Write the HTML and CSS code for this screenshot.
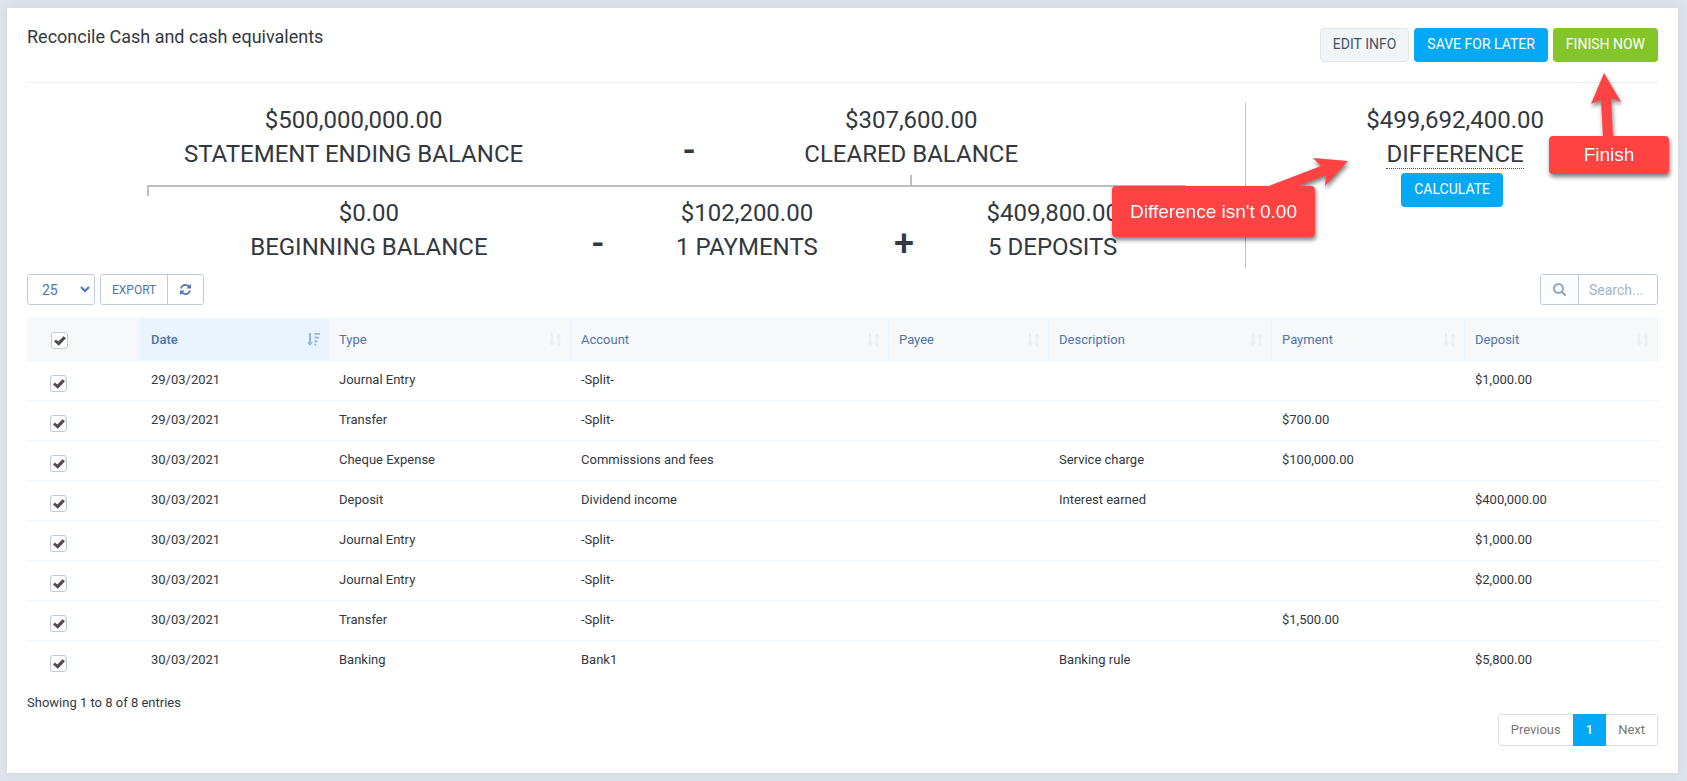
FILE: index.html
```html
<!DOCTYPE html>
<html lang="en">
<head>
<meta charset="utf-8">
<title>Reconcile Cash and cash equivalents</title>
<link rel="stylesheet" href="styles.css">
</head>
<body>
<svg class="sprite" aria-hidden="true">
  <symbol id="sort" viewBox="0 0 14 14"><path d="M2 0h2.500v10H6.500L3.250 14 0 10h2zM9.500 14h2.500V4h2L10.750 0 7.500 4h2z"/></symbol>
</svg>
<main class="panel">
  <header class="panel-head">
    <h1 class="title">Reconcile Cash and cash equivalents</h1>
    <div class="actions">
      <button class="btn btn-default" type="button">Edit info</button>
      <button class="btn btn-info" type="button">Save for later</button>
      <button class="btn btn-success" type="button">Finish now</button>
    </div>
  </header>

  <section class="summary">
    <div class="equation">
      <div class="row row-top">
        <div class="figure">$500,000,000.00<br>STATEMENT ENDING BALANCE</div>
        <div class="operator">-</div>
        <div class="figure figure-stub">$307,600.00<br>CLEARED BALANCE</div>
      </div>
      <div class="row row-bottom">
        <div class="figure">$0.00<br>BEGINNING BALANCE</div>
        <div class="operator">-</div>
        <div class="figure">$102,200.00<br>1 PAYMENTS</div>
        <div class="operator">+</div>
        <div class="figure">$409,800.00<br>5 DEPOSITS</div>
      </div>
    </div>
    <div class="difference">
      <div class="figure">$499,692,400.00<br><span class="hint">DIFFERENCE</span></div>
      <button class="btn btn-info" type="button">Calculate</button>
    </div>
  </section>

  <div class="toolbar">
    <div class="tools">
      <div class="length">
        <select class="length-select" aria-label="Rows per page"><option>25</option></select>
        <svg class="chevron" viewBox="0 0 10 7" aria-hidden="true"><path d="M1 1l4 4 4-4"/></svg>
      </div>
      <div class="group">
        <button class="tool" type="button">Export</button>
        <button class="tool tool-icon" type="button" aria-label="Refresh"><svg class="refresh" viewBox="0 0 1536 1536" aria-hidden="true"><path d="M1511 928q0 5-1 7-64 268-268 434.500T764 1536q-146 0-282.500-55T238 1324l-129 129q-19 19-45 19t-45-19-19-45V960q0-26 19-45t45-19h448q26 0 45 19t19 45-19 45l-137 137q71 66 161 102t187 36q134 0 250-65t186-179q11-17 53-117 8-23 30-23h192q13 0 22.500 9.500t9.500 22.500zm25-800v448q0 26-19 45t-45 19h-448q-26 0-45-19t-19-45 19-45l138-138Q969 256 768 256q-134 0-250 65T332 500q-11 17-53 117-8 23-30 23H50q-13 0-22.500-9.500T18 608v-7q65-268 270-434.500T768 0q146 0 284 55.500T1297 212l130-129q19-19 45-19t45 19 19 45z"/></svg></button>
      </div>
    </div>
    <div class="search">
      <label class="search-icon" for="q" aria-label="Search"><svg viewBox="0 0 1664 1664" aria-hidden="true"><path d="M1152 704q0-185-131.500-316.500T704 256 387.500 387.500 256 704t131.500 316.500T704 1152t316.500-131.500T1152 704zm512 832q0 52-38 90t-90 38q-54 0-90-38l-343-342q-179 124-399 124-143 0-273.500-55.500t-225-150-150-225T0 704t55.500-273.500 150-225 225-150T704 0t273.500 55.500 225 150 150 225T1408 704q0 220-124 399l343 343q37 37 37 90z"/></svg></label>
      <input class="search-input" id="q" type="text" placeholder="Search...">
    </div>
  </div>

  <table class="entries">
    <colgroup><col class="c-check"><col class="c-date"><col class="c-type"><col class="c-account"><col class="c-payee"><col class="c-desc"><col class="c-pay"><col class="c-dep"></colgroup>
    <thead>
      <tr>
        <th class="check"><input type="checkbox" aria-label="Select all" checked></th>
        <th class="sorted"><div class="th">Date<svg class="sort" viewBox="0 0 14 14" aria-hidden="true"><path d="M2 0h2.500v10H6.500L3.250 14 0 10h2zM8 0h6v2H8zM8 4h5v2H8zM8 8h3.500v2H8zM8 11.500h2v2H8z"/></svg></div></th>
        <th><div class="th">Type<svg class="sort"><use href="#sort"/></svg></div></th>
        <th><div class="th">Account<svg class="sort"><use href="#sort"/></svg></div></th>
        <th><div class="th">Payee<svg class="sort"><use href="#sort"/></svg></div></th>
        <th><div class="th">Description<svg class="sort"><use href="#sort"/></svg></div></th>
        <th><div class="th">Payment<svg class="sort"><use href="#sort"/></svg></div></th>
        <th><div class="th">Deposit<svg class="sort"><use href="#sort"/></svg></div></th>
      </tr>
    </thead>
    <tbody>
      <tr><td class="check"><input type="checkbox" aria-label="Select row 1" checked></td><td>29/03/2021</td><td>Journal Entry</td><td>-Split-</td><td></td><td></td><td></td><td>$1,000.00</td></tr>
      <tr><td class="check"><input type="checkbox" aria-label="Select row 2" checked></td><td>29/03/2021</td><td>Transfer</td><td>-Split-</td><td></td><td></td><td>$700.00</td><td></td></tr>
      <tr><td class="check"><input type="checkbox" aria-label="Select row 3" checked></td><td>30/03/2021</td><td>Cheque Expense</td><td>Commissions and fees</td><td></td><td>Service charge</td><td>$100,000.00</td><td></td></tr>
      <tr><td class="check"><input type="checkbox" aria-label="Select row 4" checked></td><td>30/03/2021</td><td>Deposit</td><td>Dividend income</td><td></td><td>Interest earned</td><td></td><td>$400,000.00</td></tr>
      <tr><td class="check"><input type="checkbox" aria-label="Select row 5" checked></td><td>30/03/2021</td><td>Journal Entry</td><td>-Split-</td><td></td><td></td><td></td><td>$1,000.00</td></tr>
      <tr><td class="check"><input type="checkbox" aria-label="Select row 6" checked></td><td>30/03/2021</td><td>Journal Entry</td><td>-Split-</td><td></td><td></td><td></td><td>$2,000.00</td></tr>
      <tr><td class="check"><input type="checkbox" aria-label="Select row 7" checked></td><td>30/03/2021</td><td>Transfer</td><td>-Split-</td><td></td><td></td><td>$1,500.00</td><td></td></tr>
      <tr><td class="check"><input type="checkbox" aria-label="Select row 8" checked></td><td>30/03/2021</td><td>Banking</td><td>Bank1</td><td></td><td>Banking rule</td><td></td><td>$5,800.00</td></tr>
    </tbody>
  </table>

  <p class="info">Showing 1 to 8 of 8 entries</p>
  <nav class="pages" aria-label="Pagination">
    <a class="page" href="#">Previous</a><a class="page page-active" href="#" aria-current="page">1</a><a class="page" href="#">Next</a>
  </nav>

  <div class="callout callout-difference">
    <svg class="arrow" viewBox="0 0 90 30" aria-hidden="true"><path d="M5 30L60 9 52 1 87 4 64 29 65 18 35 30z"/></svg>
    Difference isn't 0.00
  </div>
  <div class="callout callout-finish">
    <svg class="arrow" viewBox="0 0 30 64" aria-hidden="true"><path d="M12 64L10 27 0 31 13 0 30 29 20 25 22 64z"/></svg>
    Finish
  </div>
</main>
</body>
</html>
```

FILE: styles.css
```css
* { box-sizing: border-box; }

body {
  margin: 0;
  padding: 8px 9px 8px 7px;
  background: #dfe3eb;
  color: #33383f;
  font: 13px/20px Roboto, sans-serif;
}

button, input, select { font: inherit; color: inherit; }
svg { fill: currentColor; }
.sprite { display: none; }

.panel {
  position: relative;
  padding: 20px 20px 27px;
  background: #fff;
  box-shadow: 0 0 8px rgba(190, 200, 220, .5);
}

.panel-head {
  display: flex;
  justify-content: space-between;
  align-items: flex-start;
  padding-bottom: 20px;
  border-bottom: 1px solid #eceef0;
}

.title { margin: 0; font-size: 18px; font-weight: 400; line-height: 18px; }
.actions { display: flex; gap: 5px; }

.btn {
  height: 34px;
  padding: 0 12px 2px;
  border: 1px solid transparent;
  border-radius: 4px;
  font-size: 14px;
  line-height: 20px;
  text-transform: uppercase;
}
.btn-default { background: #f1f5f8; border-color: #e4e7ea; color: #475366; }
.btn-info { background: #03a9f4; color: #fff; }
.btn-success { background: #84c529; color: #fff; }

.summary { display: flex; margin-top: 20px; }

.equation {
  flex: 1219;
  display: flex;
  flex-direction: column;
  min-height: 165px;
  border-right: 1px solid #bdbec2;
}
.difference { flex: 412; text-align: center; }
.difference .figure { padding-left: 6px; margin-bottom: 2px; }
.hint { display: inline-block; height: 32px; line-height: 34px; vertical-align: top; border-bottom: 1px dotted #415165; }
.difference .figure { height: 68px; }

.row { display: grid; }
.row-top { grid-template-columns: 653fr 18fr 426fr 121fr; height: 82px; }
.row-bottom {
  position: relative;
  grid-template-columns: 442fr 14fr 283fr 30fr 266fr;
  margin: 0 59px 0 120px;
  padding-top: 9px;
  border-top: 2px solid #bdbec2;
}
.row-bottom::before, .row-bottom::after {
  content: "";
  position: absolute;
  top: 0;
  width: 2px;
  height: 9px;
  background: #bdbec2;
}
.row-bottom::before { left: 0; }
.row-bottom::after { right: 0; }

.figure { position: relative; font-size: 24px; line-height: 34px; text-align: center; white-space: nowrap; }
.figure-stub::after {
  content: "";
  position: absolute;
  bottom: 0;
  left: calc(50% - 1px);
  width: 2px;
  height: 10px;
  background: #bdbec2;
}
.operator {
  display: flex;
  justify-content: center;
  padding-top: 27px;
  font-size: 36px;
  font-weight: 500;
  line-height: 42px;
  height: 68px;
}

.toolbar { display: flex; justify-content: space-between; margin-top: 6px; }
.tools { display: flex; gap: 5px; color: #4e75ad; }
.length { position: relative; }
.length-select {
  appearance: none;
  width: 68px;
  height: 31px;
  padding: 0 14px;
  border: 1px solid #bfcbd9;
  border-radius: 3px;
  background: #fff;
  font-size: 14px;
}
.chevron { position: absolute; right: 5px; top: 12px; width: 10px; height: 7px; fill: none; stroke: currentColor; stroke-width: 2; pointer-events: none; }
.group { display: flex; }
.tool {
  height: 31px;
  padding: 0 11px;
  border: 1px solid #bfcbd9;
  border-radius: 3px 0 0 3px;
  background: #fff;
  font-size: 12px;
  text-transform: uppercase;
}
.tool-icon { margin-left: -1px; padding: 0 12px; border-radius: 0 3px 3px 0; }
.refresh { display: block; width: 11px; height: 11px; }

.search { display: flex; width: 118px; height: 31px; border: 1px solid #bfcbd9; border-radius: 3px; }
.search-icon { display: grid; place-items: center; width: 38px; border-right: 1px solid #bfcbd9; background: #fbfdff; color: #97a8be; }
.search-icon svg { width: 13px; height: 13px; }
.search-input { flex: 1; min-width: 0; padding: 0 10px; border: 0; background: none; font-size: 14px; }
.search-input::placeholder { color: #a1b4cc; opacity: 1; }

.entries { width: 100%; margin-top: 13px; border-collapse: separate; border-spacing: 0; table-layout: fixed; }
.c-check { width: 113px; }
.c-date { width: 189px; }
.c-type { width: 242px; }
.c-account { width: 318px; }
.c-payee { width: 160px; }
.c-desc { width: 223px; }
.c-pay { width: 193px; }
.c-dep { width: 193px; }

th {
  height: 43px;
  padding: 0 8px 0 10px;
  border: 1px solid #ebf5ff;
  border-left: 0;
  background: #f6f8fa;
  color: #4e75ad;
  font-weight: 400;
  text-align: left;
}
.th { display: flex; justify-content: space-between; align-items: center; }
.sorted { background: #e9f4ff; font-weight: 500; }
.sort { width: 13px; height: 13px; color: #ebeef3; }
.sorted .sort { color: #9bb6dc; }
td { height: 40px; padding: 9px 10px; border-bottom: 1px solid #ebf5ff; vertical-align: top; }
tr:last-child td { border-bottom: 0; }
.check + th, .check + td { padding-left: 11px; }
th.check { padding: 2px 0 0 24px; }
td.check { padding: 14px 0 0 23px; line-height: 0; }

input[type="checkbox"] {
  appearance: none;
  display: block;
  width: 17px;
  height: 17px;
  margin: 0;
  border: 1px solid #bfcbd9;
  border-radius: 3px;
  background: #fff;
}
input[type="checkbox"]:checked::after {
  content: "";
  display: block;
  width: 12px;
  height: 10px;
  margin: 3px 0 0 2px;
  background: #4d4d4d;
  clip-path: polygon(0 56%, 16% 36%, 36% 54%, 80% 2%, 100% 22%, 40% 98%);
}

.info { margin: 12px 0 1px; }
.pages { display: flex; width: fit-content; margin-left: auto; border: 1px solid #ddd; border-radius: 4px; }
.page { padding: 5px 12px; color: #777; text-decoration: none; }
.page-active { margin: -1px 0; padding: 6px 13px; background: #03a9f4; color: #fff; font-weight: 500; }

.callout {
  position: absolute;
  display: grid;
  place-items: center;
  border-radius: 4px;
  background: #ff4343;
  color: #fff;
  font: 19px/24px "Liberation Sans", sans-serif;
  filter: drop-shadow(1px 3px 2px rgba(0, 0, 0, .5));
}
.callout-difference { top: 178px; right: 363px; width: 203px; height: 51px; }
.callout-finish { top: 128px; right: 9px; width: 120px; height: 38px; padding-bottom: 1px; }
.arrow { position: absolute; color: #ff4343; }
.callout-difference .arrow { top: -29px; left: 149px; width: 90px; height: 30px; }
.callout-finish .arrow { top: -63px; left: 42px; width: 30px; height: 64px; }
```
